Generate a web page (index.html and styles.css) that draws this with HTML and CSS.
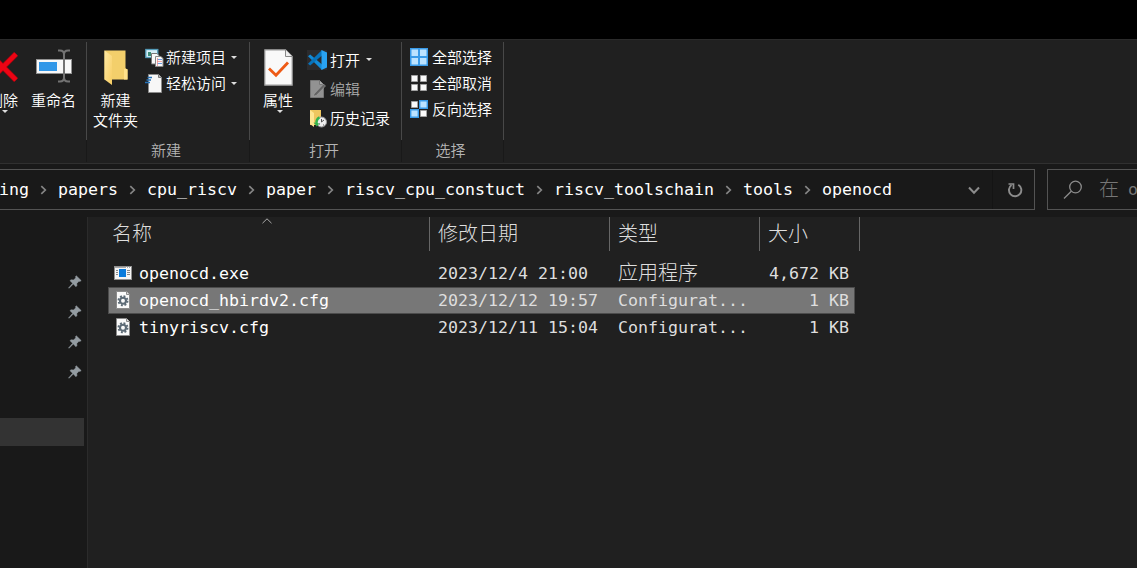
FILE: index.html
```html
<!DOCTYPE html>
<html lang="zh-CN">
<head>
<meta charset="utf-8">
<title>openocd</title>
<link rel="stylesheet" href="styles.css">
</head>
<body>
<svg class="defs" width="0" height="0">
  <defs>
    <symbol id="pin" viewBox="0 0 14 14"><path d="M8.3.8 13.2 5.6 11.9 6.400 11 6.200 8.800 8.400 8.900 10.700 8 11.700 5.300 9 1.100 13.300.6 12.900 4.600 8.300 2 5.700 3 4.800 5.600 5 7.800 2.800 7.400 1.700Z" fill="#949ca2" stroke="#949ca2" stroke-width=".5"/></symbol>
    <symbol id="sep" viewBox="0 0 7 10"><path d="M1.300 1.200 5.300 5 1.300 8.800" fill="none" stroke="#858585" stroke-width="1.700"/></symbol>
    <symbol id="cfg" viewBox="0 0 14 18"><path d="M.5.5H10.500L13.500 3.500V17.500H.5Z" fill="#fafafa" stroke="#8b8b8b"/><path d="M10.500.5V3.500H13.500" fill="#ddd" stroke="#8b8b8b"/><circle cx="7" cy="9.700" r="4.600" fill="none" stroke="#5d6b76" stroke-width="1.800" stroke-dasharray="1.9 1.71"/><circle cx="7" cy="9.700" r="3" fill="none" stroke="#5d6b76" stroke-width="2.100"/></symbol>
  </defs>
</svg>
<div class="window">
  <div class="titlebar"></div>
  <div class="ribbon">
    <section class="group organize">
      <div class="big delete">
        <svg width="30" height="30" viewBox="0 0 30 30"><path d="M2 2 28 28M28 2 2 28" stroke="#b5000c" stroke-width="5.600"/><path d="M2 2 28 28M28 2 2 28" stroke="#ec0414" stroke-width="4.400"/></svg>
        <span>删除</span><i class="caret"></i>
      </div>
      <div class="big rename">
        <svg width="36" height="34" viewBox="0 0 36 34"><rect x=".5" y="10.500" width="35" height="14" fill="#f8f8f8" stroke="#929292"/><rect x="3" y="13" width="18" height="9" fill="#3197e8"/><path d="M22 1.500H24Q28 1.500 28 5.500V28.500Q28 32.500 24 32.500H22M34 1.500H32Q28 1.500 28 5.500M28 28.500Q28 32.500 32 32.500H34" fill="none" stroke="#737373" stroke-width="2"/></svg>
        <span>重命名</span>
      </div>
    </section>
    <section class="group create">
      <div class="tools">
        <div class="big folder">
          <svg width="24" height="35" viewBox="0 0 24 35"><defs><linearGradient id="fold" x2="1" y2="1"><stop stop-color="#ffe9a4"/><stop offset="1" stop-color="#f7cd62"/></linearGradient></defs><path d="M.5.500H21.500V18L23.500 20V29.500H.5Z" fill="#f3cf6b"/><path d="M20 19H23.500V29.500H20Z" fill="#ffe18a"/><path d="M.5.500 8 6V35L.5 29.500Z" fill="url(#fold)"/></svg>
          <span>新建<br>文件夹</span>
        </div>
        <div class="stack">
          <div class="small"><svg width="19" height="19" viewBox="0 0 19 19"><rect x=".8" y="1.500" width="12" height="8" fill="#d7eff8" stroke="#549bb8" stroke-width="1.300"/><path d="M3 8V4h3v4Z" fill="#3e8d78"/><path d="M6.500 5.500H12l2 2V16H6.500Z" fill="#f9f9f9" stroke="#777"/><path d="M10.500 8.500h5.500l2 2v8h-7.500Z" fill="#f9f9f9" stroke="#888"/><path d="M12 11.500h5M12 15.500h5" stroke="#6c9de0"/><path d="M12 13.500h5M12.500 10v8" stroke="#ef9292" stroke-width=".8"/></svg><span>新建项目</span><i class="caret"></i></div>
          <div class="small"><svg width="19" height="19" viewBox="0 0 19 19"><path d="M3.500.5H13.500L16.500 3.500V18.500H3.500Z" fill="#f7f7f7" stroke="#8b8b8b"/><path d="M13.500.5V3.500H16.500" fill="#bbb" stroke="#777"/><path d="M2.500 3.500H7M1.500 6H6M0 8.500H5" stroke="#2672b6" stroke-width="1.300"/></svg><span>轻松访问</span><i class="caret"></i></div>
        </div>
      </div>
      <h2>新建</h2>
    </section>
    <section class="group open">
      <div class="tools">
        <div class="big props">
          <svg width="29" height="37" viewBox="0 0 29 37"><path d="M.8.8H21.500L28.200 7.500V36.200H.8Z" fill="#f9f9f9" stroke="#999" stroke-width="1.200"/><path d="M21.500.8V7.500H28.200" fill="#eee" stroke="#888"/><path d="M5 19.500 12 26.300 24 13.500" fill="none" stroke="#ee5a16" stroke-width="2.800"/></svg>
          <span>属性</span><i class="caret"></i>
        </div>
        <div class="stack">
          <div class="small"><svg width="20" height="20" viewBox="0 0 20 20"><rect width="20" height="20" fill="#2b2b2d"/><path d="M1 6.300 3.200 4.500 15 14.500V20Z" fill="#128bd8"/><path d="M1 13.700 3.200 15.500 15 5.500V0Z" fill="#0874bd"/><path d="M14.500 0 20 2.500V17.500L14.500 20Z" fill="#29a3f2"/></svg><span>打开</span><i class="caret"></i></div>
          <div class="small muted"><svg width="20" height="20" viewBox="0 0 20 20"><path d="M3.500 1.500H12.500L16.500 5.500V18.500H3.500Z" fill="#929292" stroke="#777"/><path d="M12.500 1.500V5.500H16.500" fill="#aaa" stroke="#777"/><path d="M7 15 16.500 5 18.500 7 9.500 16.300 6.500 17.300Z" fill="#646464" stroke="#aaa" stroke-width=".5"/></svg><span>编辑</span></div>
          <div class="small"><svg width="20" height="20" viewBox="0 0 20 20"><path d="M3 2H14V17H3Z" fill="#efc75f"/><path d="M3 2 7 5V19L3 16Z" fill="#ffe692"/><circle cx="14.500" cy="14" r="5" fill="#eee" stroke="#999"/><path d="M14.500 11v3l2.500-2M12 16h1M16 17h1" fill="none" stroke="#555"/><path d="M12.500 9.500Q9 11 9.500 16" fill="none" stroke="#35b34c" stroke-width="2.500"/><path d="M6.500 14.500 12.500 15.500 9.800 18.500Z" fill="#35b34c"/></svg><span>历史记录</span></div>
        </div>
      </div>
      <h2>打开</h2>
    </section>
    <section class="group select">
      <div class="stack">
        <div class="small"><svg width="18" height="18" viewBox="0 0 18 18"><rect width="18" height="18" fill="#3a9be8"/><path d="M1.500 1.500h6.500v6.500h-6.500ZM10 1.500h6.500v6.500H10ZM1.500 10h6.500v6.500h-6.500ZM10 10h6.500v6.500H10Z" fill="#bce3ff"/></svg><span>全部选择</span></div>
        <div class="small"><svg width="18" height="18" viewBox="0 0 18 18"><path d="M1.500 1.500h6v6h-6ZM10.500 1.500h6v6h-6ZM1.500 10.500h6v6h-6ZM10.500 10.500h6v6h-6Z" fill="#fafafa" stroke="#a2a2a2"/></svg><span>全部取消</span></div>
        <div class="small"><svg width="18" height="18" viewBox="0 0 18 18"><path d="M1.500 1.500h6v6h-6ZM10.500 10.500h6v6h-6Z" fill="#fafafa" stroke="#a2a2a2"/><path d="M9.700.7h7.600v7.600H9.700ZM.7 9.700h7.600v7.600H.7Z" fill="#bce3ff" stroke="#3a9be8" stroke-width="1.400"/></svg><span>反向选择</span></div>
      </div>
      <h2>选择</h2>
    </section>
  </div>
  <div class="nav">
    <div class="address">
      <div class="crumbs">
        <span>ing</span><svg><use href="#sep"/></svg><span>papers</span><svg><use href="#sep"/></svg><span>cpu_riscv</span><svg><use href="#sep"/></svg><span>paper</span><svg><use href="#sep"/></svg><span>riscv_cpu_constuct</span><svg><use href="#sep"/></svg><span>riscv_toolschain</span><svg><use href="#sep"/></svg><span>tools</span><svg><use href="#sep"/></svg><span>openocd</span>
      </div>
      <div class="drop"><svg width="12" height="9" viewBox="0 0 12 9"><path d="M1 1.500 6 6.800 11 1.500" fill="none" stroke="#8c8c8c" stroke-width="2"/></svg></div>
      <div class="refresh"><svg width="16" height="16" viewBox="0 0 16 16"><path d="M11.300 2.700A6.200 6.200 0 1 1 4.500 3" fill="none" stroke="#8c8c8c" stroke-width="1.900"/><path d="M1.500 2H6.500V7" fill="none" stroke="#8c8c8c" stroke-width="1.700"/></svg></div>
    </div>
    <div class="search"><svg width="20" height="20" viewBox="0 0 20 20"><circle cx="12.500" cy="7" r="5.800" fill="none" stroke="#8c8c8c" stroke-width="1.300"/><path d="M8.300 11.200 1 18.500" stroke="#8c8c8c" stroke-width="1.300"/></svg><span class="cjk">在</span><span>o</span></div>
  </div>
  <div class="main">
    <aside>
      <div class="pins"><svg><use href="#pin"/></svg><svg><use href="#pin"/></svg><svg><use href="#pin"/></svg><svg><use href="#pin"/></svg></div>
      <div class="current"></div>
    </aside>
    <div class="files">
      <div class="head">
        <div class="name">名称<svg class="sort" width="10" height="6" viewBox="0 0 10 6"><path d="M.5 5.200 5 .8 9.500 5.200" fill="none" stroke="#aaa"/></svg></div><div class="date">修改日期</div><div class="type">类型</div><div class="size">大小</div>
      </div>
      <div class="rows">
        <div class="row"><div class="icon"><svg width="18" height="14" viewBox="0 0 18 14"><rect x=".5" y=".5" width="17" height="13" fill="#f5f5f5" stroke="#919191"/><path d="M1 1.500H17" stroke="#aaa"/><path d="M12 1.500h1M14 1.500h1M16 1.500h1" stroke="#fff"/><rect x="5" y="3" width="7" height="8" fill="#0a7bdc"/><path d="M2 4.500h2M2 6.500h2M2 8.500h2M13 4.500h3M13 6.500h3M13 8.500h3" stroke="#888"/></svg></div><div class="fname">openocd.exe</div><div class="fdate">2023/12/4 21:00</div><div class="ftype cjk">应用程序</div><div class="fsize">4,672 KB</div></div>
        <div class="row selected"><div class="icon"><svg width="14" height="18"><use href="#cfg"/></svg></div><div class="fname">openocd_hbirdv2.cfg</div><div class="fdate">2023/12/12 19:57</div><div class="ftype">Configurat...</div><div class="fsize">1 KB</div></div>
        <div class="row"><div class="icon"><svg width="14" height="18"><use href="#cfg"/></svg></div><div class="fname">tinyriscv.cfg</div><div class="fdate">2023/12/11 15:04</div><div class="ftype">Configurat...</div><div class="fsize">1 KB</div></div>
      </div>
    </div>
  </div>
</div>
</body>
</html>
```
FILE: styles.css
```css
* { box-sizing: border-box; }
body { margin: 0; background: #202020; color: #fff; overflow: hidden; }
svg { display: block; flex: none; }
.defs { position: absolute; }
.window { width: 1137px; height: 568px; display: flex; flex-direction: column; overflow: hidden; }
.titlebar { height: 39px; background: #000; flex: none; }

.ribbon { height: 125px; flex: none; display: flex; border-top: 1px solid #2b2b2b; border-bottom: 1px solid #303030; background: #202020; font: 350 15px/20px "Noto Sans CJK SC", sans-serif; }
.group { height: 120px; margin-top: 2px; display: flex; flex-direction: column; justify-content: space-between; border-right: 1px solid; border-image: linear-gradient(#484848 97px, #191919 97px) 1; }
.group h2 { margin: 0 0 2px; font-size: 15px; font-weight: 350; line-height: 20px; color: #b4b4b4; text-align: center; }
.organize { width: 87px; flex-direction: row; justify-content: flex-start; }
.create { width: 163px; }
.open { width: 152px; }
.select { width: 102px; }
.tools { display: flex; }
.big { display: flex; flex-direction: column; align-items: center; text-align: center; white-space: nowrap; flex: none; }
.delete { width: 40px; margin-left: -17px; padding-top: 10px; }
.delete span { margin-top: 8px; }
.big .caret { margin-left: 4px; }
.rename { width: 61px; padding-top: 7px; }
.rename span { margin-top: 7px; }
.folder { width: 57px; padding-top: 8px; }
.folder span { margin-top: 5px; }
.props { width: 56px; padding-top: 7px; }
.props span { margin-top: 4px; }
.caret { width: 0; height: 0; border: 3.5px solid transparent; border-top-color: #ddd; border-bottom: 0; }
.small { display: flex; align-items: center; white-space: nowrap; }
.create .stack { padding: 2px 0 0 1px; }
.create .small { height: 26px; gap: 2px; }
.small .caret { margin-left: 3px; }
.open .stack { padding: 3px 0 0 1px; }
.open .small { height: 29px; gap: 3px; }
.select .stack { padding: 2px 0 0 8px; }
.select .small { height: 26px; gap: 4px; }
.muted { color: #aaa; }
.create h2 { padding-right: 4px; }
.open h2 { padding-right: 3px; }
.select h2 { padding-right: 4px; }

.nav { height: 53px; flex: none; display: flex; gap: 12px; padding-top: 5px; background: #191919; font: 16.61px/20px "DejaVu Sans Mono", monospace; }
.address { width: 1035px; height: 41px; display: flex; border: 1px solid #535353; border-left: 0; }
.crumbs { flex: 1; display: flex; align-items: center; margin-left: -1px; white-space: pre; }
.crumbs span { padding-top: 1px; }
.crumbs svg { width: 7px; height: 10px; margin: 0 11px; }
.drop, .refresh { width: 41px; display: flex; align-items: center; justify-content: center; padding-top: 1px; }
.drop { border-right: 1px solid #141414; padding-left: 3px; }
.refresh { padding-left: 2px; }
.search { flex: 1; height: 41px; display: flex; align-items: center; border: 1px solid #535353; border-right: 0; padding-left: 15px; color: #777; overflow: hidden; white-space: nowrap; }
.search .cjk { margin: -3px 9px 0 16px; }
.cjk { font: 300 20px/24px "Noto Sans CJK SC", sans-serif; }

.main { flex: 1; display: flex; min-height: 0; }
aside { width: 88px; background: #191919; border-right: 1px solid #2b2b2b; display: flex; flex-direction: column; }
.pins { height: 201px; padding: 58px 0 0 68px; display: flex; flex-direction: column; gap: 16px; }
.pins svg { width: 14px; height: 14px; }
.current { width: 84px; height: 28px; background: #333; }
.files { flex: 1; background: #202020; font: 16.61px/25px "DejaVu Sans Mono", monospace; }
.head { height: 34px; display: flex; font: 300 20px/31px "Noto Sans CJK SC", sans-serif; color: #dedede; }
.head > div { border-right: 1px solid #666; padding-left: 8px; white-space: nowrap; }
.head .name { width: 342px; padding-left: 24px; display: flex; }
.sort { margin: 1px 0 0 110px; }
.head .date { width: 180px; }
.head .type { width: 150px; }
.head .size { width: 100px; }
.rows { padding: 9px 0 0 20px; }
.row { width: 747px; height: 27px; display: grid; grid-template-columns: 30px 299px 180px 130px 101px; grid-template-rows: 25px; align-items: center; border: 1px solid transparent; white-space: pre; color: #dedede; }
.row .icon { padding: 0 0 2px 5px; }
.row:nth-child(n+2) .icon { padding-left: 7px; }
.row .fname { color: #fff; }
.row .cjk { line-height: 21px; padding-bottom: 4px; }
.fsize { text-align: right; }
.selected { background: #777; border-color: #4c4c4c; }
```
